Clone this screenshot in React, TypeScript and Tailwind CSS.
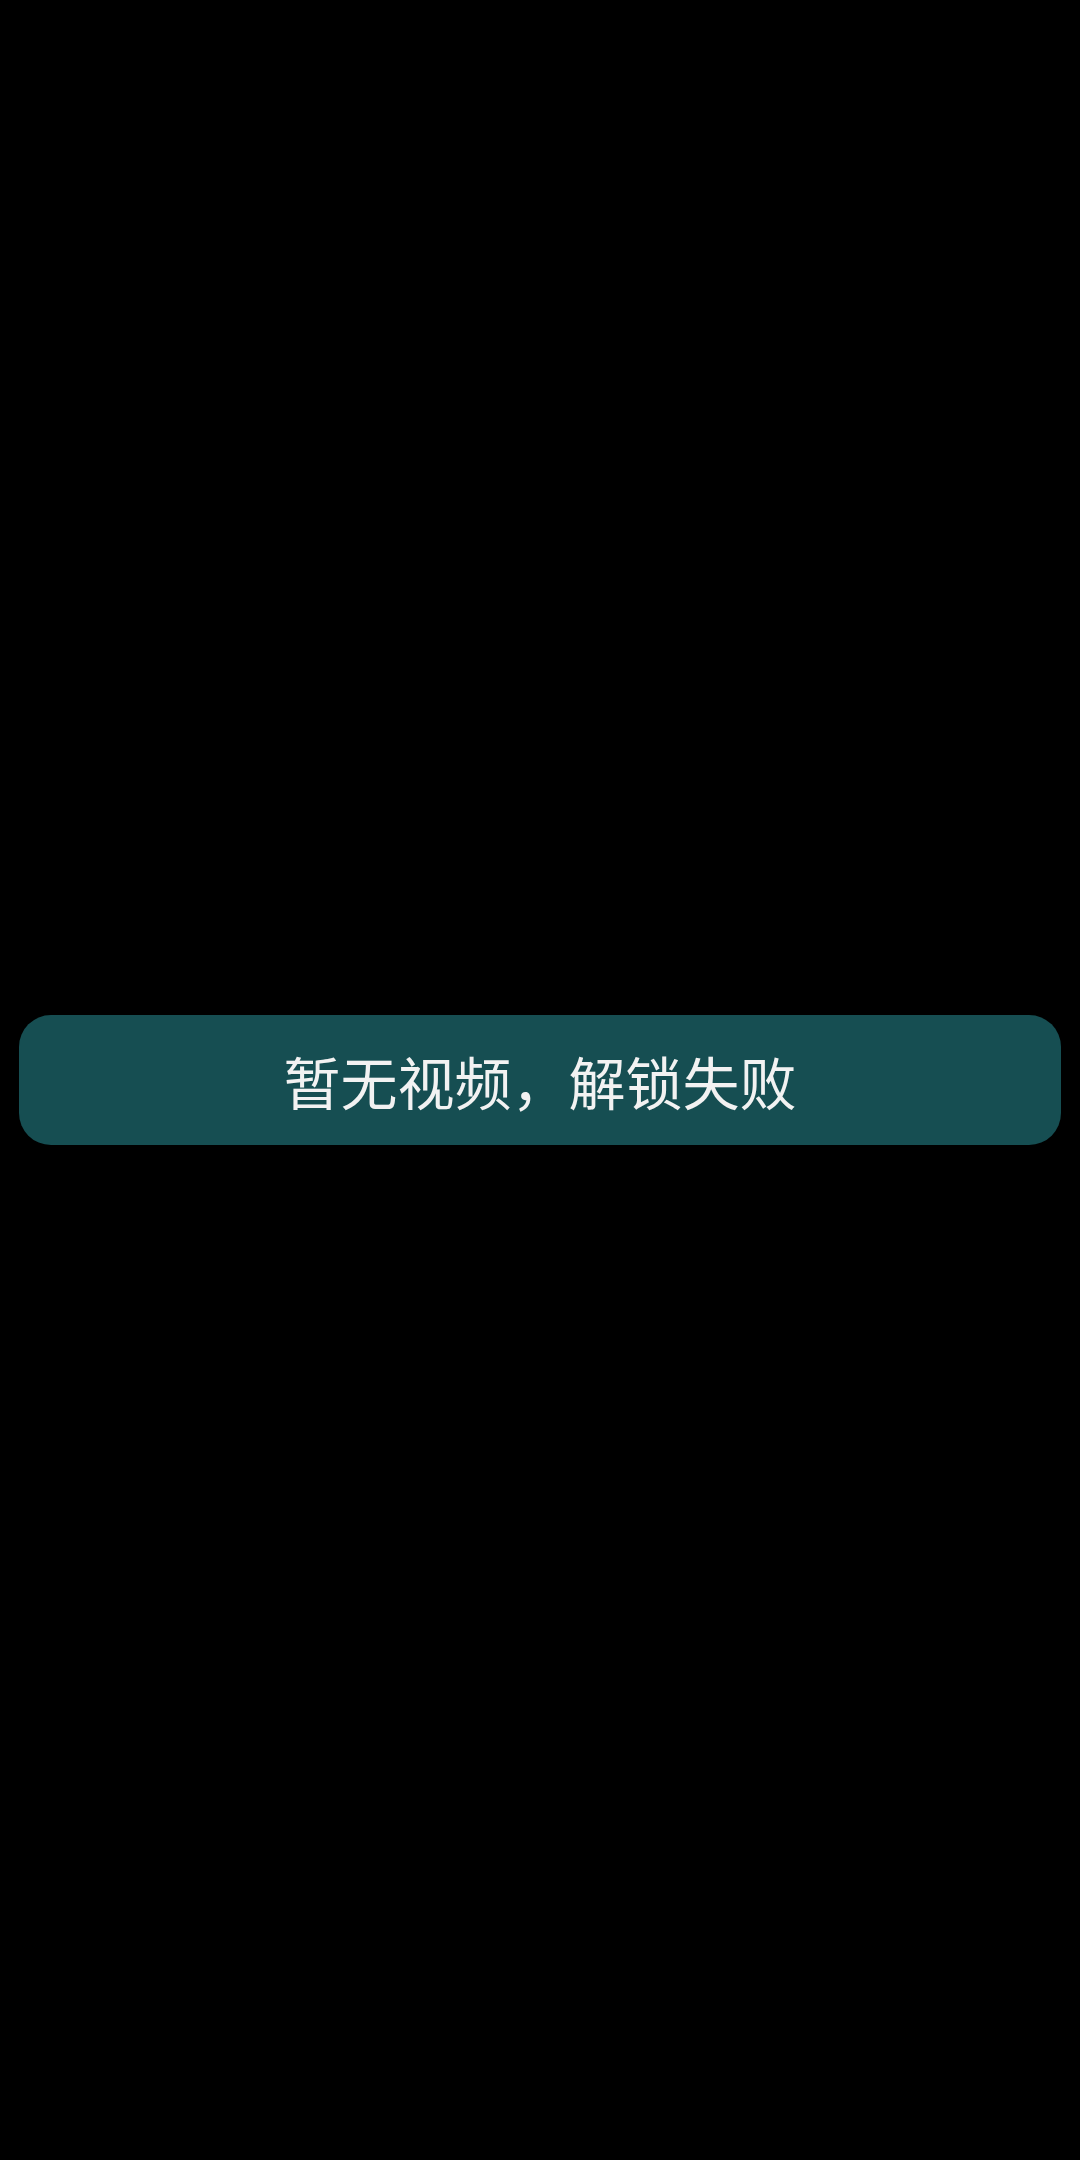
import React from 'react';

const App: React.FC = () => {
  return (
    <div className="flex h-[2160px] w-full items-center justify-center bg-black px-[19px]">
      {/* Toast */}
      <div className="flex h-[130px] w-full items-center justify-center rounded-[32px] bg-[#164e52]">
        <span
          className="text-[57px] leading-none text-[#f2f2f2]"
          style={{ fontFamily: '"Noto Sans CJK SC", "Noto Sans", sans-serif' }}
        >
          暂无视频，解锁失败
        </span>
      </div>
    </div>
  );
};

export default App;
